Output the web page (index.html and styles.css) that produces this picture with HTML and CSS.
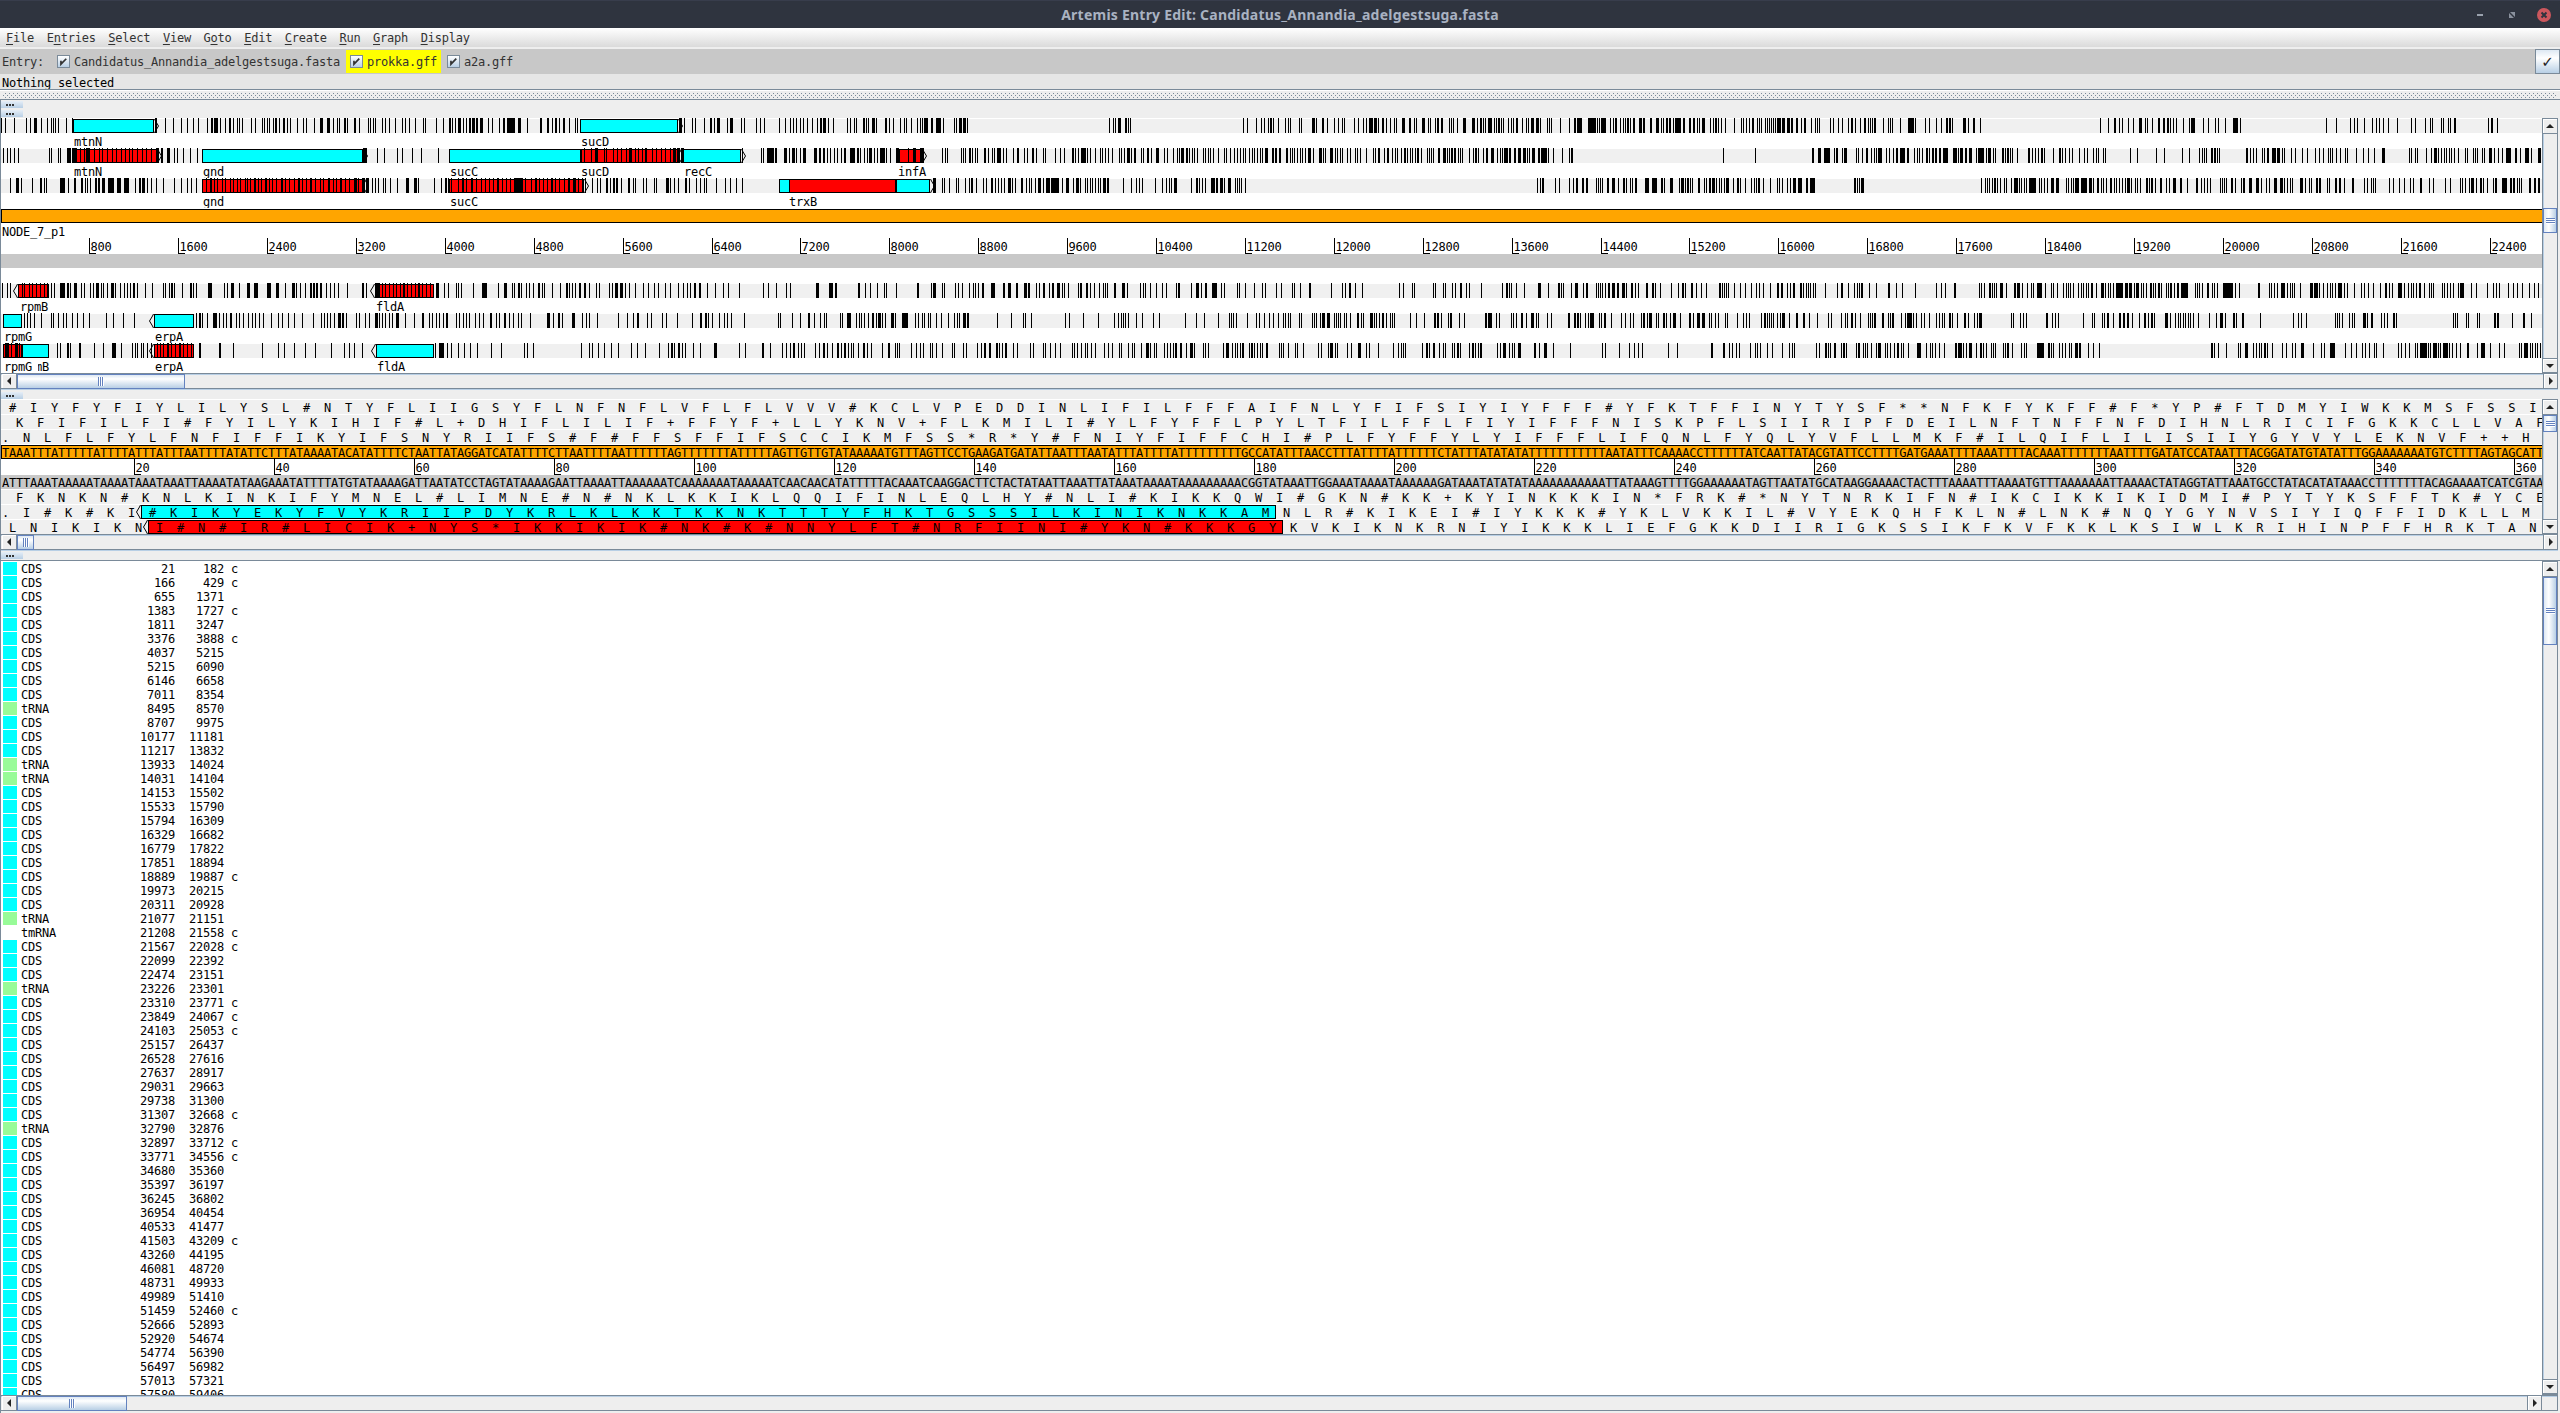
FILE: index.html
```html
<!DOCTYPE html>
<html lang="en">
<head>
<meta charset="utf-8">
<title>Artemis Entry Edit: Candidatus_Annandia_adelgestsuga.fasta</title>
<link rel="stylesheet" href="styles.css">
</head>
<body>
<header class="titlebar">
  <h1 class="title">Artemis Entry Edit: Candidatus_Annandia_adelgestsuga.fasta</h1>
  <svg class="window-buttons" width="90" height="28" viewBox="0 0 90 28">
    <path d="M7 14h6" stroke="#9aa1ad" stroke-width="2"/>
    <path d="M40 11h5v5zM39 12v5h5z" fill="#8a919d"/>
    <circle cx="74" cy="14" r="7" fill="#cc575d"/>
    <path d="M71.5 11.5l5 5m0-5l-5 5" stroke="#2f343f" stroke-width="2"/>
  </svg>
</header>
<nav class="menubar">
  <span><u>F</u>ile</span><span>E<u>n</u>tries</span><span><u>S</u>elect</span><span><u>V</u>iew</span><span>G<u>o</u>to</span><span><u>E</u>dit</span><span><u>C</u>reate</span><span><u>R</u>un</span><span><u>G</u>raph</span><span><u>D</u>isplay</span>
</nav>
<div class="entries">
  <span class="entry-title">Entry:</span>
  <label class="entry"><svg class="box" viewBox="0 0 13 13"><path d="M3.5 5.5v4.2L9.8 3.2" /></svg>Candidatus_Annandia_adelgestsuga.fasta</label>
  <label class="entry entry-active"><svg class="box" viewBox="0 0 13 13"><path d="M3.5 5.5v4.2L9.8 3.2" /></svg>prokka.gff</label>
  <label class="entry"><svg class="box" viewBox="0 0 13 13"><path d="M3.5 5.5v4.2L9.8 3.2" /></svg>a2a.gff</label>
  <button class="confirm">✓</button>
</div>
<div class="status">Nothing selected</div>
<div class="divider"><svg width="2554" height="8"><defs><pattern id="dots" width="4" height="4" patternUnits="userSpaceOnUse"><path d="M0 0h1v1h-1zM2 2h1v1h-1z" fill="#7a8a99"/></pattern></defs><rect y="2" width="2554" height="5" fill="url(#dots)"/></svg></div>
<main class="panels">
  <div class="grips"><i class="grip"></i><i class="grip"></i></div>
  <section class="view">
    <div class="canvas" id="overview"></div>
    <div class="vbar"><i class="arrow up"></i><i class="thumb thumb-overview-v"></i><i class="arrow down"></i></div>
  </section>
  <div class="hbar"><i class="arrow left"></i><i class="thumb thumb-overview-h"></i><i class="arrow right"></i></div>
  <div class="grips grips-single"><i class="grip"></i></div>
  <section class="view">
    <div class="canvas" id="bases"></div>
    <div class="vbar"><i class="arrow up"></i><i class="thumb thumb-bases-v"></i><i class="arrow down"></i></div>
  </section>
  <div class="hbar"><i class="arrow left"></i><i class="thumb thumb-bases-h"></i><i class="arrow right"></i></div>
  <div class="grips grips-list"><i class="grip"></i></div>
  <section class="view view-list">
    <div class="canvas features" id="features"></div>
    <div class="vbar"><i class="arrow up"></i><i class="thumb thumb-list-v"></i><i class="arrow down"></i></div>
  </section>
  <div class="hbar hbar-list"><i class="arrow left"></i><i class="thumb thumb-list-h"></i><i class="arrow right"></i><i class="corner"></i></div>
</main>
<script src="view.js"></script>
</body>
</html>
```
FILE: styles.css
```css
* { box-sizing: border-box; }
body {
  margin: 0;
  width: 2560px;
  height: 1413px;
  overflow: hidden;
  display: flex;
  flex-direction: column;
  background: #eee;
  color: #000;
  font: 12px/14px "DejaVu Sans Mono", monospace;
  letter-spacing: -0.224px;
}
svg { display: block; }
svg text { font: 12px "DejaVu Sans Mono", monospace; letter-spacing: -0.224px; white-space: pre; }
.titlebar {
  flex: none;
  height: 28px;
  display: grid;
  grid-template-columns: 90px 1fr 90px;
  align-items: center;
  background: #2f343f;
  border-top: 1px solid #383d4c;
}
.title {
  grid-column: 2;
  margin: 0;
  text-align: center;
  font: 700 14px/24px "Noto Sans", sans-serif;
  letter-spacing: 0.23px;
  color: #a9b2c2;
}
.menubar {
  flex: none;
  height: 21px;
  display: flex;
  gap: 12.6px;
  padding: 3px 6px 0;
  background: linear-gradient(#fff, #dadada);
  border-bottom: 2px solid #eee;
  color: #333;
}
.menubar u { text-underline-offset: 2px; }
.entries {
  flex: none;
  height: 25px;
  display: flex;
  align-items: center;
  padding-left: 2px;
  background: #c8c8c8;
  color: #333;
}
.entry-title { width: 51px; }
.entry {
  height: 23px;
  display: flex;
  align-items: center;
  padding: 0 2px 0 4px;
  margin-right: 4px;
}
.entry-active { background: #ff0; }
.entry:nth-of-type(1) { width: 289px; }
.entry-active { width: 95px; margin-right: 2px; }
.box {
  width: 13px;
  height: 13px;
  margin-right: 4px;
  border: 1px solid #7a8a99;
  background: linear-gradient(#fff, #b8cfe5);
}
.box path { fill: none; stroke: #333; stroke-width: 2; }
.confirm {
  width: 25px;
  height: 25px;
  margin-left: auto;
  padding: 0;
  border: 1px solid #7a8a99;
  background: linear-gradient(#dde8f3, #fff 35%, #b8cfe5);
  font: 15px "DejaVu Sans", sans-serif;
  color: #222;
}
.status { flex: none; height: 15px; padding: 2px 2px 0; background: #e6e6e6; }
.divider {
  flex: none;
  height: 11px;
  padding: 1px 0 0 3px;
  border-top: 1px solid #7a8a99;
  border-bottom: 1px solid #7a8a99;
  box-shadow: inset 0 1px #fff;
}
.panels { height: 1313px; border-left: 1px solid #7a8a99; }
.grips { height: 18px; padding-top: 1px; display: grid; gap: 2px; align-content: start; }
.grips-single { height: 9px; padding-top: 2px; }
.grips-list { height: 10px; padding-top: 1px; border-bottom: 1px solid #7a8a99; }
.grip {
  width: 22px;
  height: 7px;
  background:
    linear-gradient(90deg, #333 2px, transparent 2px) 5px 3px / 3px 2px no-repeat,
    linear-gradient(90deg, #333 2px, transparent 2px) 8px 3px / 3px 2px no-repeat,
    linear-gradient(90deg, #333 2px, transparent 2px) 11px 3px / 3px 2px no-repeat,
    linear-gradient(#e6eef7, #b8cfe5);
}
.view { display: flex; }
.canvas { width: 2541px; background: #fff; overflow: hidden; }
#overview { height: 255px; }
#bases { height: 135px; }
.view-list { height: 834px; }
.vbar {
  width: 16px;
  display: flex;
  flex-direction: column;
  border: 1px solid #7a8a99;
  border-bottom: 0;
  box-shadow: inset 1px 1px #b8cfe5;
}
.hbar {
  height: 17px;
  width: 2557px;
  display: flex;
  border-top: 1px solid #7a8a99;
  border-bottom: 1px solid #b8cfe5;
  box-shadow: inset 0 1px #b8cfe5, inset 0 -1px #7a8a99;
}
.arrow { flex: none; position: relative; background: #eee; border: 0 solid #7a8a99; box-shadow: inset 1px 1px #fff; }
.vbar .arrow { height: 15px; }
.hbar .arrow { width: 15px; height: 15px; }
.up { border-bottom-width: 1px; }
.down { border-width: 1px 0; margin-top: auto; }
.left { border-right-width: 1px; border-bottom-width: 1px; margin-left: 1px; }
.right { border-width: 0 1px 1px; margin-left: auto; }
.arrow::after { content: ""; position: absolute; background: #222; }
.up::after, .down::after { left: 3px; top: 5px; width: 8px; height: 4px; clip-path: polygon(50% 0, 100% 100%, 0 100%); }
.down::after { clip-path: polygon(0 0, 100% 0, 50% 100%); }
.left::after, .right::after { left: 5px; top: 3px; width: 4px; height: 8px; clip-path: polygon(0 50%, 100% 0, 100% 100%); }
.right::after { clip-path: polygon(0 0, 100% 50%, 0 100%); }
.thumb { flex: none; border: 1px solid #6382bf; display: block; }
.vbar .thumb {
  background:
    repeating-linear-gradient(#6382bf 0 1px, #fff 1px 2px) center / 9px 6px no-repeat,
    linear-gradient(90deg, #dde8f3, #fff 40%, #b8cfe5);
}
.hbar .thumb {
  height: 15px;
  background:
    repeating-linear-gradient(90deg, #6382bf 0 1px, #fff 1px 2px) center / 6px 9px no-repeat,
    linear-gradient(#dde8f3, #fff 30%, #b8cfe5);
}
.thumb-overview-v { height: 25px; margin-top: 74px; }
.thumb-overview-h { width: 168px; }
.thumb-bases-v { height: 17px; }
.thumb-bases-h { width: 17px; }
.thumb-list-v { height: 68px; }
.thumb-list-h { width: 110px; }
.view-list .vbar { border-bottom: 1px solid #7a8a99; }
.hbar-list { height: 16px; border-bottom: 0; }
.corner { width: 16px; border-right: 1px solid #7a8a99; }
.track { fill: #f0f0f0; }
.cyan { fill: #0ff; }
.red { fill: #f00; }
.outlined { stroke: #000; stroke-width: 1; }
.stops, .line { fill: #000; }
.marker { fill: none; stroke: #000; stroke-width: 1; shape-rendering: auto; }
.forward { fill: #ffa500; }
.reverse { fill: #c8c8c8; }
.paper { fill: #fff; }
.features { padding: 1px 0 0 2px; }
.feature { height: 14px; display: flex; gap: 4px; white-space: pre; line-height: 14px; }
.swatch { width: 14px; height: 13px; }
.CDS { background: #0ff; }
.tRNA { background: #98fb98; }
```
FILE: view.js
```js
// The overview is drawn in tiles: each tile has an origin and a number of units per pixel.
const TILES = [[0, 1.823], [840, 2.613], [1400, 3], [1900, 2.376]];

// Stop codon marks of each reading frame, one line per tile, as position or position:width.
const STOPS = [
[
'3 10 26 47 56 62:4 76 87 93 97 101 106 120 132 283:3 301 316 331 341 353 362 378 385:3 391:4 397 402 410 418:3 426 432 437 442 458 466 478 482 487 491 498 502:3 510 517:3 524 529 542 552 558 573 583:4 597:5 607 614 619 628:3 633 645:3 655 671 675 680 684 697 703 709 721 733 739 746 757 771 776 796 809 819:3 825 830 836:4 844 850 855:3 861:4 868:3 876:5 891 897 910 918:3 925:10 936:3 945:4 962 985:3 997:3 1007 1013:3 1020 1026:3 1038 1048 1053 1238:5 1248 1262 1268 1284 1294:3 1303 1308:4 1325 1331:5 1352 1357 1379 1386 1393 1420 1432 1440 1447 1452 1458 1465 1471 1480 1490 1496:3 1501:5 1510 1519',
'19 26 38 43 61:4 68 74 85:7 95 119:4 129 139 158 168 173 187:3 202 209 214 220:10 238:5 252:12 270 298 304 311:8 322:7 333 704 713 719 727:7 746:4 753 759 1054:3 1064 1088 1101 1108 1118 1125:4 1133 1145 1163 1171 1177 1201 1206 1234:6 1244 1261:4 1273 1292 1303 1311 1317:3 1344 1355:3 1367 1374 1383:9 1396:6 1406 1417:4 1427 1438 1448 1454',
'6:9 27:5 42 48 66:8 84 90 105 111:5 123:5 147 153 159 171 189:8 216:8 231 240:5 249 255 264:11 282 288 294:5 303 309 324 333 339 348:5 366 378 384 393:8 408:8 420 441 447 453 480 507 522:5 531:15 564:24 591 597 603:14 630 639 645:5 660 669 675 681:5 690 699:5 717:8 729:5 750:5 768:8 783 789 798:5 807:5 819 825:10 837:5 849:5 867:5 879:5 891 897 906:8 930 939 945:5 954 963 975 1002 1023 1029 1038 1047 1056:5 1071 1077 1083 1095 1101 1107 1113 1119 1125 1131:11 1146:8 1161:8 1173:5 1188:5 1203 1212:5 1233 1245 1251 1257 1290 1299 1314 1326 1344 1353:5 1365 1380 1392:5 1404 1410 1416 1422:5 1449 1464 1470 1476',
'0 20:10 31 36 59 69 87 97 109:4 116:5 124 151:6 162 174:4 191 476 495 508:4 520 527 542 555 569:6 582 588 600 614:4 626:4 634:5 642 649 657 673 688 692:9 721 733 749 756 772 792:12 808 1012 1036 1069 1079 1086 1103 1121 1131 1139 1149 1160 1181 1214 1224 1247 1260 1265 1286 1291 1303 1307 1317:4 1397 1404:5 1419'
],
[
'6 13 19 26 33 89 94 106 110 123:6 131:5 138:3 147 153 158:6 172 181 187 196 204 212 221 228 235 242 251 259 267 276 284:4 294:3 305:4 317 324 335 346 360 663:6 687 700 725 734 752 768 799 1066 1078 1085:5 1101 1106 1118 1125 1133 1141 1147:4 1158 1164 1170 1177:3 1190 1197 1205 1213 1222 1228:4 1235:5 1242:4 1354 1387 1391 1398:3 1403:8 1413:3 1429:4 1438 1444:4 1452 1459 1465:4 1484:4 1493:3 1500:3 1508 1514 1521 1527',
'2 10:4 27:12 44:5 53 63 70 76:6 89 96 106:11 122:3 131 147:8 179 192:6 209:10 268 274 281 317 323 328:3 338:4 346 353 359:3 377:4 388 397 403 411:10 426 433 453 464:5 482 488 503:4 512 530 535 563 575 587 607:4 615 623 631:12 646 653 667 680 686 694 702 710 729 735 742 751:8 762 769:4 788 793 802:5 813:3 826:7 848 855 871 881 886 892:4 898 904:4 912 919 925 933 950 955 962 968 976 989 1003:3 1008 1020 1030 1038 1046 1053 1060 1070:3 1076 1083:3 1090 1097 1104 1112:7 1130:4 1138:5 1147:5 1167:4 1176 1182 1188:3 1195 1203 1209 1215 1223:8 1236 1252:6 1262 1268 1282:8 1294 1300 1306 1311 1324 1333 1346 1352 1360 1376 1394 1399 1405:4 1423 1429:5 1443 1450 1457',
'3 12:5 21 30 36 45 51:5 63 81 87 93 99 114:5 129:8 141 147 153:5 162:5 174 180 186 207 219 225:5 234 249 258:5 273:8 291 300 306 312:11 327:5 342:5 354:8 369:8 381 387 396:8 414:5 423:17 444 459 486 507 513:5 969 1065 1236:5 1254:8 1272:17 1302 1308:5 1326 1332:8 1368 1374 1386 1398:5 1413 1422 1428 1434:11 1458 1467 1479 1488:5',
'0:10 17:4 34 40 46 53 62:4 70 76:4 84:3 94:4 102:12 126:9 138 143:7 154:4 164:7 181 186:14 204 209:6 221 226 242:4 249 255:4 262 267 279 305:5 314 321 329 335:5 342 364 379:3 386 392 403 410 426 438 445 460 467 472 483 488 547 563 609 628 670 687 711 717 722 727 739:5 746:5 753 759 822:4 832 839 846 860 866 872:5 884:6 892 897:6 907 914 930 938 955 967 986 997 1005 1017 1023 1028 1036 1046 1058 1063 1084 1100 1112 1127 1145:7 1209 1215 1224 1230 1251 1263 1269:7 1279 1285 1292 1298 1304 1310 1317 1327 1343 1348 1362 1367 1372 1383 1388 1400:6 1413 1422 1430 1440:12 1461:4 1473 1485:8 1499 1516:7'
],
[
'18 29:4 39 58 74:3 80 85 109:8 124 136:3 149:3 155 160 165 174:3 180:3 186:4 197:11 213:4 219 227:8 246 254:3 260:4 269 276 284 297 318 331 341 349 358 376 383:3 391 397 405 411 419 425 432 438 447 451 457 464:3 470 477 484:3 491 496 503 512:3 520 527 536 543:3 551 558 566:3 575 583 590 599:3 607 613 621:3 629 637 645:4 653 660:4 667:3 672 679 684 690 698 703 712 725 740:5 756:4 763 791 805 811:3 817 823 835 843:3 850 860:3 868 878 884 892 900 907:3 915 923 930 937:6 945:9 958 968 975:3 983 990 998 1005:3 1013 1020 1028 1036:3 1045:5 1054 1062 1067 1079 1088 1094 1105:3 1112 1118:3 1124:3 1132 1146:3 1155 1159 1172 1178 1192 1197 1214:4 1222 1230 1236 1250:3 1256 1270 1276 1283 1288 1306 1322 1331 1342 1354',
'243:8 268 273 285 303 308 328 338:3 344:5 356 375 383:3 396:5 405 413 420 429 439:6 450 457 474:4 487:3 495 500 510 519:8 531 538:4 545:4 551:12 565:6 580:3 591:6 609:3 616:8 627 641 647 653 659 666:3 674:3 681 687:6 698:4 741:3 761 775:3 781 790 824 842 853 859 865 873:8 918 931:4 939 947 955 970:9 983:4 993:8 1005:3 1014:7 1033 1038 1043 1049 1060',
'411 420 426:5 465 477 507 519 528:5 546:5 558:5 588 594 600 606 621:5 636:8 654 669:5 678 690 696 705:5 735:11 756:14 783:5 792 810:8 837 843:8 855 861:5 870 876 894:5 912 918 927:5 936:8 948 957 963 972 978:8 999 1011:5 1020 1035 1053 1062 1068 1074:5 1089 1110 1131 1137 1146 1161 1170 1179:8 1194:11 1218:5 1230:14 1362:5 1371 1377 1383:8',
'192 202 207 212 219 224:3 230 238 248 253 264 271:9 283 289 295 301 306:8 317:6 331 336 342 349 359:6 371:6 394 400 406 412 417:8 430:10 443 449:7 460 468:4 477 484 490 499:4 508 514 522 529 534 539:6 549 559 564 571 584:4 591 597:5 606 618:4 632 640 649:6 665:4 682 704:4 716 722 729 737 760 765 770 775 786:5 796 811 816:4 829:5 835 846:6 858 870 877 890:4 895 904:6 914 919 926 932 950:4 956 963 972 977 988:4 996:4 1015 1020 1033:4 1044:5 1055 1074:4 1103 1111 1119 1124 1129 1162 1171 1187 1198 1212 1219 1235:4 1257 1266 1295 1307 1330 1336 1342 1352 1357:7 1368 1379:3 1385 1395 1409 1415:5 1430:12 1449:5 1457:4 1467 1472 1477 1494:4 1506:4 1516:4'
],
[
'5 13 18 40 45 53 59 66 74 80 86 94 99 110:8 123:3 129 135:4 149 153 164 170 176:4 184 189 195 203:4 211 219 227 232 238 243:3 250 265 278 297 301 308 313:3 318 333 346:3 352 358 379:6 408 414 421:4 437 450:4 463:6 487:6 504:4 520 532:4 541 547 556 565:3 571:3 576:3 583:3 595 603 610 617 633 660:3 667 684:5 690:3 697 703 710 717 723 729 736:3 743 750 757 763:3 770 777 784 795:4 810 817 831 836 841 863 880:9 908 920:4 933 938 944:3 951 959 965 972 982:3 988 993 1006 1022 1032:3 1038 1044 1049 1056:3 1065:3 1075 1087 1092 1110 1116 1122:4 1131:4 1140 1147 1158 1172 1182 1193 1200 1213 1222 1237 1245 1252 1258 1266:3 1274:3 1289 1304 1318 1328 1348 1391 1401 1415 1433 1440 1488:4 1511:4 1517 1522:3',
'47:4 66 80 96 116 121 147 202:4 238 243:8 268 273 302 308 320 338 349 354 361 372:4 395:10 427:4 439:8 461:4 482:8 493:4 513 520:3 531:5 546 555:4 567:8 580 586 597 622 627:5 643:4 654 664 678 688 693 698 717:4 737:8 751 785 791 797 811 826 842 853 879:3 884:5 918 930:7 943 954:4 972:9 984 996 1004 1038 1044 1059 1083 1104 1111 1140 1153 1182 1187 1203 1227:4 1284 1313 1320 1331:4 1346 1365 1461',
'9 36 42 99 105 129 135 156 165 180:5 198 207 243 306 318:5 327 333 348 372 414:8 444 474:5 483 489 513 525:8 549 558:5 588 594 600 606 615 624:5 636:8 651:5 666:8 678 693:5 705 714 738:5 756:5 765 780 813 834 846:5 855 873:5 888 903 918 957:5 966 972 978 984 1002 1020 1035 1053 1068 1077 1089 1110 1131:5 1143:5 1161 1170 1179:5 1200:5 1209 1218 1224 1230 1239 1245 1275 1311 1323:5 1344 1362 1371 1377 1383:5 1407 1428 1464:5 1488',
'5 37 87 97 108 128:4 189 194 201 211:4 219 224 229 238:7 252 271:5 278:6 290 303 311 317 325:8 335 345 359 365 373 388 394 400 405 411 424 430 436 442 448 455:4 467 479:6 488 494 500 506 513:10 525:5 535:7 545:6 556 561:7 573 578 584 594:4 601 607 614:4 621 632 637 643:4 652 659:5 667:6 676:8 702 707 712 717 729:5 741 747 753 768:4 773:18 797 806 852:4 877 882 890 896 905:6 914 920 926 932 937 951 975:7 984:9 997 1005 1014 1021 1027 1034 1041:8 1055 1062 1080 1096 1104 1112 1124 1141 1153:4 1162 1169 1184:8 1199 1208 1214 1220 1226 1233:5 1246 1257 1262 1267 1288 1294 1301 1307 1314 1327 1331:8 1358 1369 1395 1409 1416 1423 1444 1457 1467 1478 1494 1506 1516'
],
[
'45 49 56 62 76 93 98 107 115 120 131 141 152 163 194 207 224 245 357 363:3 369 377 389:6 400 407 413 419:3 431 436 444 453 460 466 472 480 494 508 514 525 536 551 572 585 591 597 603 609 616:4 624:3 632 649 655 665 673 684:4 692 697 703 709 715 722:5 738 756 770:3 782 788 795 800 808 814:3 831 838 844 850 856 867 874 881 893:3 904 910 920:3 928 936 944 951 967 998:5 1009 1017:3 1025 1044:5 1062 1068 1074 1088 1128 1143 1155 1162:3 1180 1187 1208 1215 1235 1262 1277:3 1285:3 1292 1298 1311 1320 1326 1333 1356 1418 1422 1444 1458 1474:3 1484 1496 1502 1507',
'1 7 18:8 27 42 50:3 56 62 73 85:5 94 99:6 110 118 133:8 145 162:16 197 205 214 220 231 236:3 251 265 283 298 306 312 322:6 333:4 411 447 479 484 500 589 599 636 675 717 726 735 740 746 753 774 790 819 835 902 931 952 989 1018 1023 1028 1036 1064 1088 1096 1109 1122 1133 1145 1158 1164 1171 1177 1201 1206 1234 1239 1245 1254 1260:7 1273:8 1292 1297 1302 1307 1317 1323 1333 1352:4 1362 1368 1386:7 1397 1402 1409 1417:5 1427 1438 1444 1449',
'30 48 72 102:5 111:5 123 144 150:5 177 192 255:5 264:11 288 297 333 339 348 363:5 378 393:8 408 414 441 453 504:5 522:5 531:5 540 555 564 570:11 597 603 612:5 633 663 675 690 699 723 729:5 741 747:8 768 774 789:5 798 810 819:8 840 867:5 879 891:8 906:8 927 933 945 954 975 981 1011 1029 1038 1047 1083 1092:5 1101 1107 1113 1119 1131 1140 1146:8 1167 1188:5 1209:5 1227 1251 1284 1293 1323 1335 1341 1353:5 1365 1380 1404 1410 1416 1422:5 1446:5 1464 1470 1476:5',
'2 12 18:11 31 38 50 57 69 87 92 100 105 117:4 124 136 152:5 162 177 183 189:6 265 270 285 293 299 348:4 361 368 376 435 457 462 481 486 492:5 506 520:5 530:4 541:5 551 568 581:5 590 597:4 604 630:7 641 654 660 665 672 678 684 690 696 709 735 751 760:4 766 772 792:4 800 813:4 855 935 945 954 965 1034 1039 1044 1050 1068 1074 1080 1100:6 1109 1119:4 1143 1150 1158 1171:5 1180 1314 1320 1324 1345 1350 1371 1376 1411:4 1418:4 1454 1481:4 1500'
],
[
'9:4 15 21 28:5 36 104 110 122:3 129 145:3 171 189 205:4 211 221 242 246 251 257 262 268 275 287 292 298 305:3 312 319 326:3 334 341 348 363:3 400:3 426 478 507 519 536 557 574 604 628 636 645 661 794 800:8 816 822 835 847 858 870 896 914 955 962 973 1059 1075 1079 1091 1101 1115 1127 1151 1161 1176 1201 1219 1224:3 1230 1236:3 1243 1249 1264 1277 1302:4 1347 1358 1389:3 1404 1426 1433 1440 1447:3 1455 1461 1466 1487 1493 1500:3 1509 1518 1527:3',
'2 11:4 22 29 35 48 61:4 72 81 111 126:4 145 150 155 187 200 209 217 236 241 252:3 267 292 299 321 330 359 368 377:4 390:4 408:5 416 425:3 432:4 453 464 498 505 530 537 550 563 576:3 607 613 620 630:3 640 646 657 667 691 701 710 730 735 754 764 769 787 801:7 811 822 827:3 848:3 855 862 870:3 876:4 890:4 905 915:6 926:3 950 955 963 1002:3 1008:6 1026 1032 1038 1046 1052:5 1070 1075:4 1082:3 1091 1097 1102 1114:4 1148 1153 1159 1170 1190 1195 1211 1250:3 1257 1276 1282:8 1294 1300 1326 1336 1355:7 1376 1383 1407 1446 1458',
'3 9 15 66 78:5 87 99:5 117 129 135 156 162 171:5 180 207 216:5 225 234 240:5 291 300 309:8 327 336 342 354:8 402:5 417 432:8 459 510 606 615 657 687 702 714 726 804 831 933:5 969:5 987 996 1008 1017 1050 1065 1071 1080 1101 1116 1146 1167 1176 1182 1248 1257 1275:5 1284 1290 1302:5 1323 1329:5 1338 1368 1374:5 1389 1395 1401 1413 1428 1434:8 1455 1461 1470 1482 1491:5',
'2 8 19 40:9 62 71 77 83 93 105 131:3 138:9 150 157 164:7 181 190:5 198 204 217 222 227 245 250 255:5 266 288 294 299 325:6 334:9 352:4 359 364 379 386 392 403 407 416:7 426:4 447 460 474 739:4 746 755 774 803 808 821:3 826 839 846 853 859 865:5 872 884 908 918 931 940 953:6 981 1001 1008 1022:11 1057 1072 1084 1098 1106 1114 1126 1131 1148 1184 1190 1200 1210 1224 1230 1236:8 1246:6 1255 1259 1266:9 1278 1284 1290:12 1304 1311 1321 1330 1347:4 1371 1381:8 1402 1423 1435 1471 1476 1482:9 1498 1503 1509 1515 1521'
]
];

// Features per frame: colour, start, end, marker direction (0 = none).
const GENES = [
  [['cyan', 73, 154, 1], ['cyan', 580, 678, 1]],
  [['red', 74, 157, 1], ['cyan', 202, 363, 1], ['cyan', 449, 581, 0], ['red', 581, 679, 1], ['cyan', 683, 741, 1], ['red', 899, 922, 1]],
  [['red', 202, 364, 1], ['red', 449, 584, 1], ['cyan', 779, 790, 0], ['red', 789, 896, 0], ['cyan', 896, 930, 1]],
  [['red', 18, 49, -1], ['red', 375, 434, -1]],
  [['cyan', 3, 22, 0], ['cyan', 154, 194, -1]],
  [['red', 3, 22, 0], ['cyan', 22, 49, 0], ['red', 154, 194, -1], ['cyan', 376, 434, -1]]
];
const LABELS = [
  [['mtnN', 74], ['sucD', 581]],
  [['mtnN', 74], ['gnd', 203], ['sucC', 450], ['sucD', 581], ['recC', 684], ['infA', 898]],
  [['gnd', 203], ['sucC', 450], ['trxB', 789]],
  [['rpmB', 20], ['fldA', 376]],
  [['rpmG', 4], ['erpA', 155]],
  [['rpmB', 21], ['rpmG', 4], ['erpA', 155], ['fldA', 377]]
];

const svg = (height, body) =>
  `<svg width="2541" height="${height}" viewBox="1 0 2541 ${height}" shape-rendering="crispEdges">${body}</svg>`;
const rect = (cls, x, y, w, h) => `<rect class="${cls}" x="${x}" y="${y}" width="${w}" height="${h}"/>`;
const marker = (x, y, dir) =>
  `<path class="marker" d="M${x + 0.5} ${y}l${dir} 2l${dir * 3} 5l${dir * -3} 5l${dir * -1} 2"/>`;

function frame(i) {
  let out = rect('track', 1, 1, 2541, 14);
  for (const [cls, x1, x2] of GENES[i]) out += rect(cls + ' outlined', x1 + 0.5, 1.5, x2 - x1 - 1, 13);
  let d = '';
  STOPS[i].forEach((line, t) => {
    const [origin, scale] = TILES[t];
    for (const mark of line.split(' ')) {
      const [x, w] = mark.split(':').map(Number);
      const width = w ? Math.round(w / scale + 0.35) : 1;
      d += `M${Math.round(origin + (x - 0.5) / scale)} 0h${width}v15h-${width}z`;
    }
  });
  out += `<path class="stops" d="${d}"/>`;
  for (const [, x1, x2, dir] of GENES[i]) if (dir) out += marker(dir > 0 ? x2 : x1 - 1, 1, dir);
  for (const [name, x] of LABELS[i]) {
    out += rect('paper', x, 15, name.length * 7 + 6, 15) + `<text x="${x}" y="28">${name}</text>`;
  }
  return svg(30, out);
}

function ruler(height, step, unit, base, baseline) {
  let out = '';
  for (let n = 1; base + step * (n - 1) < 2542; n++) {
    const x = Math.round(base + step * (n - 1));
    out += rect('line', x, height - 16, 1, 16) + rect('line', x, height - 1, 7, 1) +
      `<text x="${x + 1.5}" y="${baseline}">${n * unit}</text>`;
  }
  return out;
}

document.getElementById('overview').innerHTML =
  frame(0) + frame(1) + frame(2) +
  svg(46, rect('forward outlined', 1.5, 1.5, 2560, 13) + '<text x="2" y="28">NODE_7_p1</text>' + ruler(46, 88.9, 800, 89.2, 43)) +
  svg(29, rect('reverse', 1, 0, 2541, 14)) +
  frame(3) + frame(4) + frame(5);

const DNA =
  'TAAATTTATTTTTATTTTATTTATTTAATTTTATATTCTTTATAAAATACATATTTTCTAATTATAGGATCATATTTTCTTAATTTTAATTTTTT' +
  'AGTTTTTTTATTTTTAGTTGTTGTATAAAAATGTTTAGTTCCTGAAGATGATATTAATTTAATATTTATTTTATTTTTTTTTGCCATA' +
  'TTTAACCTTTATTTTATTTTTTCTATTTATATATATTTTTTTTTTTAATATTTCAAAACCTTTTTTATCAATTATACGTATTCCTTTT' +
  'GATGAAATTTTAAATTTTACAAATTTTTTTAATTTTGATATCCATAATTTACGGATATGTATATTTGGAAAAAAATGTCTTTTAGTAGCATTC';
const PAIR = { A: 'T', T: 'A', C: 'G', G: 'C' };
const comp = [...DNA].map(b => PAIR[b]).join('');
const CODE = 'FFLLSSSSYY#+CC*WLLLLPPPPHHQQRRRRIIIMTTTTNNKKSSRRVVVVAAAADDEEGGGG';
const amino = c => CODE['TCAG'.indexOf(c[0]) * 16 + 'TCAG'.indexOf(c[1]) * 4 + 'TCAG'.indexOf(c[2])];

function translate(strand, offset, backwards) {
  const row = Array(strand.length).fill(' ');
  if (offset === 2) row[0] = '.';
  for (let i = offset; i + 3 <= strand.length; i += 3) {
    let codon = strand.slice(i, i + 3);
    if (backwards) codon = [...codon].reverse().join('');
    row[i + 1] = amino(codon);
  }
  return row.join('').trimEnd();
}
function residues(text, gene) {
  let out = rect('track', 1, 1, 2541, 14);
  if (gene) out += rect(gene[0] + ' outlined', gene[1] + 0.5, 1.5, gene[2] - gene[1] - 1, 13) + marker(gene[1] - 1, 1, -1);
  return svg(15, out + `<text x="2" y="13">${text}</text>`);
}
document.getElementById('bases').innerHTML =
  residues(translate(DNA, 0)) + residues(translate(DNA, 1)) + residues(translate(DNA, 2)) +
  svg(15, rect('forward outlined', 1.5, 1.5, 2560, 13) + `<text x="2" y="13">${DNA}</text>`) +
  svg(16, ruler(16, 140, 20, 134, 13)) +
  svg(14, rect('reverse', 1, 0, 2541, 14) + `<text x="2" y="12">${comp}</text>`) +
  residues(translate(comp, 1, true)) +
  residues(translate(comp, 2, true), ['cyan', 141, 1276]) +
  residues(translate(comp, 0, true), ['red', 148, 1283]);

// Feature list: T = tRNA, M = tmRNA, otherwise CDS; c = complement strand.
const FEATURES = `21 182 c,166 429 c,655 1371,1383 1727 c,1811 3247,3376 3888 c,4037 5215,5215 6090,6146 6658,7011 8354,T8495 8570,8707 9975,10177 11181,11217 13832,T13933 14024,T14031 14104,14153 15502,15533 15790,15794 16309,16329 16682,16779 17822,17851 18894,18889 19887 c,19973 20215,20311 20928,T21077 21151,M21208 21558 c,21567 22028 c,22099 22392,22474 23151,T23226 23301,23310 23771 c,23849 24067 c,24103 25053 c,25157 26437,26528 27616,27637 28917,29031 29663,29738 31300,31307 32668 c,T32790 32876,32897 33712 c,33771 34556 c,34680 35360,35397 36197,36245 36802,36954 40454,40533 41477,41503 43209 c,43260 44195,46081 48720,48731 49933,49989 51410,51459 52460 c,52666 52893,52920 54674,54774 56390,56497 56982,57013 57321,57580 59406`;
document.getElementById('features').innerHTML = FEATURES.split(',').map(entry => {
  const type = { T: 'tRNA', M: 'tmRNA' }[entry[0]] || 'CDS';
  const [start, end, strand = ''] = entry.replace(/^[TM]/, '').split(' ');
  return `<div class="feature"><i class="swatch ${type}"></i><span>${type.padEnd(15)}${start.padStart(7)}${end.padStart(7)} ${strand}</span></div>`;
}).join('');
```
